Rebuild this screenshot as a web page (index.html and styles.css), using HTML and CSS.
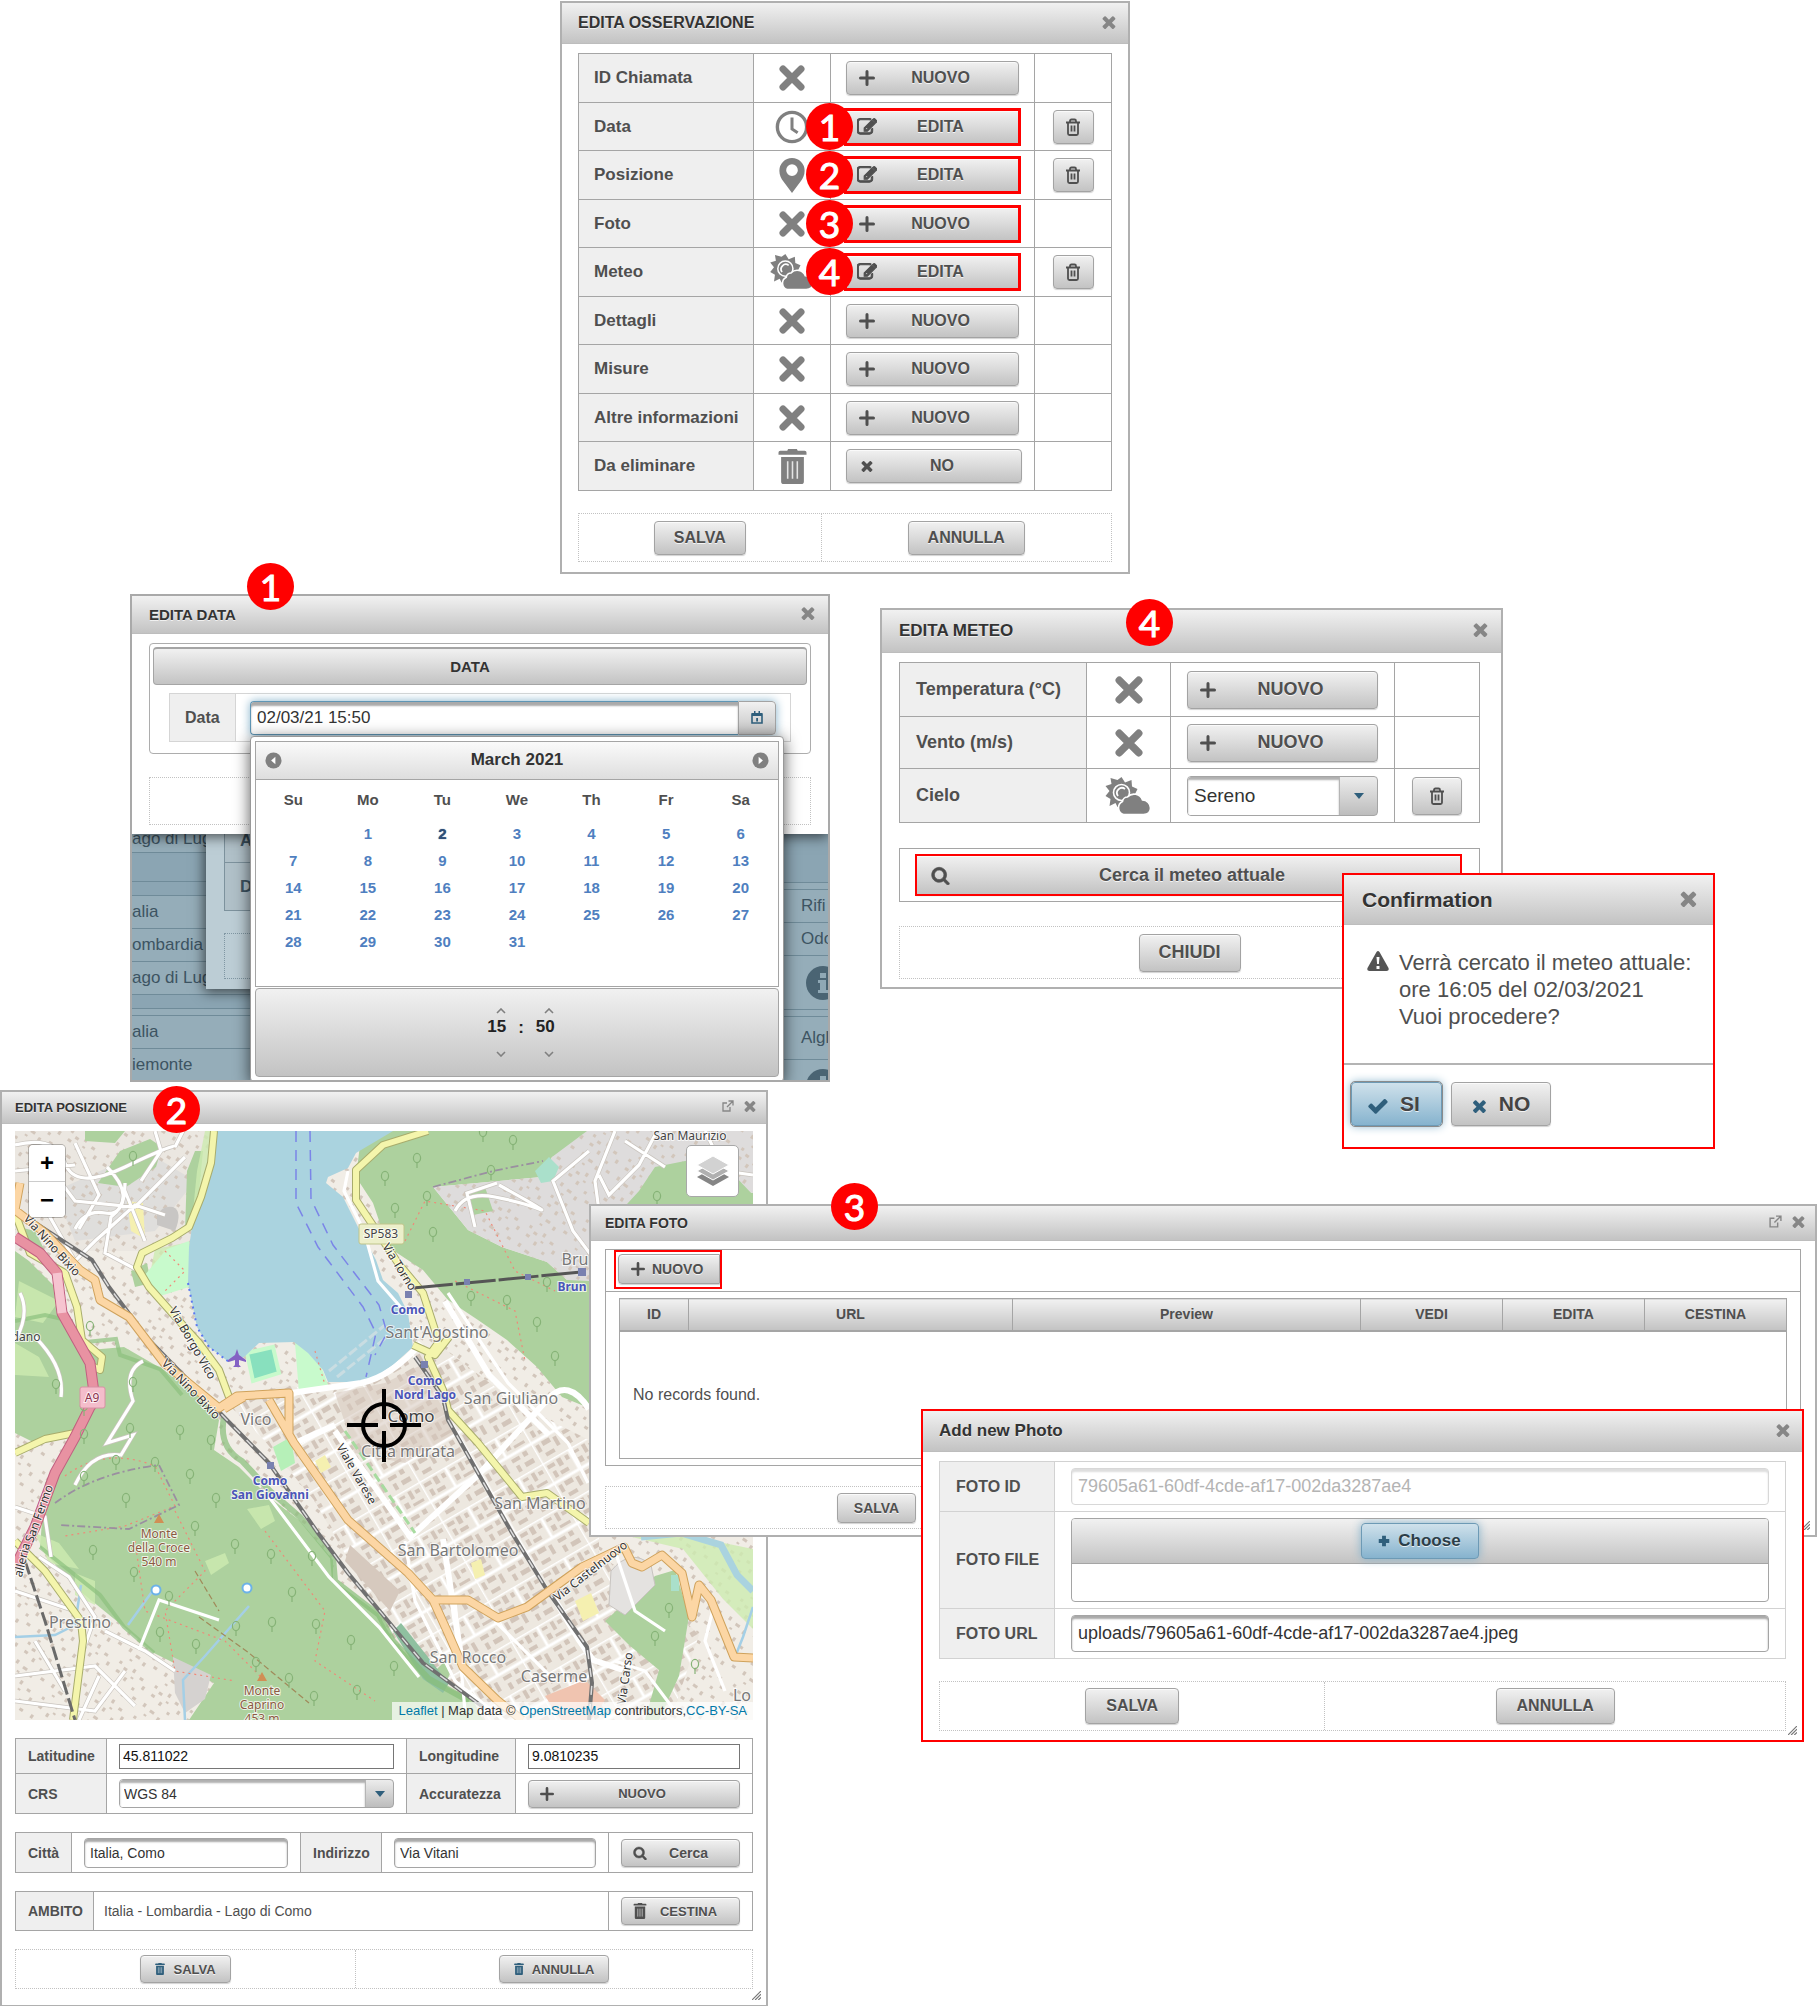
FILE: index.html
```html
<!DOCTYPE html>
<html lang="it">
<head>
<meta charset="utf-8">
<meta name="viewport" content="width=device-width, initial-scale=1">
<title>Edita osservazione</title>
<link rel="stylesheet" href="styles.css">
</head>
<body>

<!-- Icon sprite -->
<svg class="sprite" aria-hidden="true">
  <symbol id="i-times" viewBox="250 250 1300 1300"><path d="M1490 1322q0 40-28 68l-136 136q-28 28-68 28t-68-28l-294-294-294 294q-28 28-68 28t-68-28l-136-136q-28-28-28-68t28-68l294-294-294-294q-28-28-28-68t28-68l136-136q28-28 68-28t68 28l294 294 294-294q28-28 68-28t68 28l136 136q28 28 28 68t-28 68l-294 294 294 294q28 28 28 68z"/></symbol>
  <symbol id="i-cross" viewBox="0 0 26 26"><path d="M4 4l18 18M22 4L4 22" fill="none" stroke="currentColor" stroke-width="7" stroke-linecap="round"/></symbol>
  <symbol id="i-plus" viewBox="0 0 16 16"><path d="M8 1.500v13M1.500 8h13" fill="none" stroke="currentColor" stroke-width="3" stroke-linecap="round"/></symbol>
  <symbol id="i-plus-bold" viewBox="0 0 16 16"><path d="M8 2v12M2 8h12" fill="none" stroke="currentColor" stroke-width="4.400"/></symbol>
  <symbol id="i-edit" viewBox="0 0 1792 1792"><path d="M888 1184l116-116-152-152-116 116v56h96v96h56zm520-126v190q0 119-84.500 203.500t-203.500 84.500h-832q-119 0-203.500-84.500t-84.500-203.500v-832q0-119 84.500-203.500t203.500-84.500h832q63 0 117 25 15 7 18 23 3 17-9 29l-49 49q-14 14-32 8-23-6-45-6h-832q-66 0-113 47t-47 113v832q0 66 47 113t113 47h832q66 0 113-47t47-113v-126q0-13 9-22l64-64q15-15 35-7t20 29zm-96-738l288 288-672 672h-288v-288zm444 132l-92 92-288-288 92-92q28-28 68-28t68 28l152 152q28 28 28 68t-28 68z" stroke="currentColor" stroke-width="90"/></symbol>
  <symbol id="i-trash-o" viewBox="0 0 16 18"><g fill="none" stroke="currentColor" stroke-width="1.800"><path d="M3 5v10.500q0 1.500 1.500 1.500h7q1.500 0 1.500-1.500V5M1 4.500h14M5 4.500V3q0-1.500 1.500-1.500h3Q11 1.500 11 3v1.500M6.500 7.500v6M9.500 7.500v6"/></g></symbol>
  <symbol id="i-trash" viewBox="0 0 32 40"><path d="M11 0h10l1 2h8q2 0 2 2v2.500H0V4q0-2 2-2h8zM3 9h26v28q0 3-3 3H6q-3 0-3-3z"/><path d="M10.500 14v20M16 14v20M21.500 14v20" stroke="#fff" stroke-width="1.800" opacity=".8"/></symbol>
  <symbol id="i-clock" viewBox="0 0 36 36"><circle cx="18" cy="18" r="15.500" fill="none" stroke="currentColor" stroke-width="3.600"/><path d="M18 8v12l6 4" fill="none" stroke="currentColor" stroke-width="3.200"/></symbol>
  <symbol id="i-marker" viewBox="0 0 26 36"><path d="M13 0a13 13 0 0 1 13 13c0 5-2 8-4 11l-9 12-9-12C2 21 0 18 0 13A13 13 0 0 1 13 0zm0 6.500a6 6 0 1 0 0 12 6 6 0 0 0 0-12z" fill-rule="evenodd"/></symbol>
  <symbol id="i-cloud-sun" viewBox="0 0 46 38"><path d="M16 0l3.500 5.500L26 3l.5 6.500L32 12l-3 6-8 14-9-2-2-4-6 3 1-7-5-3 4-5-4-5 6-2-1-6 7 2z"/><circle cx="16" cy="15.500" r="8" fill="none" stroke="#fff" stroke-width="1.600"/><path d="M12.500 19a5 5 0 0 1 7-7" fill="none" stroke="#fff" stroke-width="1.800"/><path d="M18 37.500a7 7 0 0 1-1-13 5 5 0 0 1 5-4.500 9 9 0 0 1 15 3 8 8 0 0 1 8 8q0 6.500-7 6.500z" stroke="#fff" stroke-width="1.600"/></symbol>
  <symbol id="i-search" viewBox="0 0 1792 1792"><path d="M1216 832q0-185-131.500-316.500t-316.500-131.500-316.500 131.500-131.500 316.500 131.500 316.500 316.500 131.500 316.500-131.500 131.500-316.500zm512 832q0 52-38 90t-90 38q-54 0-90-38l-343-342q-179 124-399 124-143 0-273.500-55.500t-225-150-150-225-55.500-273.500 55.500-273.500 150-225 225-150 273.500-55.500 273.500 55.500 225 150 150 225 55.500 273.500q0 220-124 399l343 343q37 37 37 90z" stroke="currentColor" stroke-width="60"/></symbol>
  <symbol id="i-check" viewBox="100 200 1600 1400"><path d="M1671 566q0 40-28 68l-724 724-136 136q-28 28-68 28t-68-28l-136-136-362-362q-28-28-28-68t28-68l136-136q28-28 68-28t68 28l294 295 656-657q28-28 68-28t68 28l136 136q28 28 28 68z"/></symbol>
  <symbol id="i-ext" viewBox="0 0 12 12"><path d="M5 3H1v8h7V7M6.500 1H11v4.500M11 1L5 7" fill="none" stroke="currentColor" stroke-width="1.300"/></symbol>
  <symbol id="i-warn" viewBox="0 0 22 20"><path d="M9.500 1q1.500-2 3 0l9 16q1 3-2 3h-17q-3 0-2-3zM9.500 6l.6 7h1.800l.6-7zm0 9v3h3v-3z" fill-rule="evenodd"/></symbol>
  <symbol id="i-calendar" viewBox="0 0 12 13"><path d="M1 3h10v9H1z" fill="none" stroke="currentColor" stroke-width="1.600"/><path d="M1 2h10v3H1zM3 0h1.500v3H3zM7.500 0H9v3H7.500zM5.200 7h1.800v3.500H5.200z"/></symbol>
  <symbol id="i-caret" viewBox="0 0 12 7"><path d="M0 0h12L6 7z"/></symbol>
  <symbol id="i-up" viewBox="0 0 10 6"><path d="M1 5l4-4 4 4" fill="none" stroke="currentColor" stroke-width="1.600"/></symbol>
  <symbol id="i-down" viewBox="0 0 10 6"><path d="M1 1l4 4 4-4" fill="none" stroke="currentColor" stroke-width="1.600"/></symbol>
  <symbol id="i-prev" viewBox="0 0 18 18"><circle cx="9" cy="9" r="8.500"/><path d="M11 5v8L6.500 9z" fill="#fff"/></symbol>
  <symbol id="i-next" viewBox="0 0 18 18"><circle cx="9" cy="9" r="8.500"/><path d="M7 5v8l4.500-4z" fill="#fff"/></symbol>
  <symbol id="i-grip" viewBox="0 0 10 10"><path d="M0 10L10 0M3.500 10L10 3.500M7 10l3-3" stroke="currentColor" stroke-width="1.300"/></symbol>
  <symbol id="i-info" viewBox="0 0 34 34"><circle cx="17" cy="17" r="17"/><path d="M14 7h6v5h-6zM12 14h8v10h3v3H12v-3h2v-7h-2z" fill="#8fa8b5"/></symbol>
  <symbol id="i-layers" viewBox="0 0 32 30"><path d="M16 12l16 9-16 9-16-9z" fill="#858585"/><path d="M16 6l16 9-16 9-16-9z" fill="#b0b0b0" stroke="#fff"/><path d="M16 0l16 9-16 9L0 9z" fill="#d2d2d2" stroke="#fff"/></symbol>
</svg>

<main class="desktop">

  <!-- Edita osservazione -->
  <section class="window win-obs">
    <header class="titlebar"><h2>EDITA OSSERVAZIONE</h2><button class="tool" aria-label="Chiudi"><svg><use href="#i-times"/></svg></button></header>
    <table class="props">
      <colgroup><col class="c-label"><col class="c-icon"><col><col class="c-del"></colgroup>
      <tr><th scope="row">ID Chiamata</th><td class="state"><svg class="st-x"><use href="#i-cross"/></svg></td><td class="act"><button class="btn"><svg><use href="#i-plus"/></svg><span>NUOVO</span></button></td><td></td></tr>
      <tr><th scope="row">Data</th><td class="state"><svg class="st-clock"><use href="#i-clock"/></svg><b class="badge">1</b></td><td class="act"><button class="btn marked"><svg class="wide"><use href="#i-edit"/></svg><span>EDITA</span></button></td><td class="del"><button class="btn" aria-label="Elimina"><svg><use href="#i-trash-o"/></svg></button></td></tr>
      <tr><th scope="row">Posizione</th><td class="state"><svg class="st-marker"><use href="#i-marker"/></svg><b class="badge">2</b></td><td class="act"><button class="btn marked"><svg class="wide"><use href="#i-edit"/></svg><span>EDITA</span></button></td><td class="del"><button class="btn" aria-label="Elimina"><svg><use href="#i-trash-o"/></svg></button></td></tr>
      <tr><th scope="row">Foto</th><td class="state"><svg class="st-x"><use href="#i-cross"/></svg><b class="badge">3</b></td><td class="act"><button class="btn marked"><svg><use href="#i-plus"/></svg><span>NUOVO</span></button></td><td></td></tr>
      <tr><th scope="row">Meteo</th><td class="state"><svg class="st-cloud"><use href="#i-cloud-sun"/></svg><b class="badge">4</b></td><td class="act"><button class="btn marked"><svg class="wide"><use href="#i-edit"/></svg><span>EDITA</span></button></td><td class="del"><button class="btn" aria-label="Elimina"><svg><use href="#i-trash-o"/></svg></button></td></tr>
      <tr><th scope="row">Dettagli</th><td class="state"><svg class="st-x"><use href="#i-cross"/></svg></td><td class="act"><button class="btn"><svg><use href="#i-plus"/></svg><span>NUOVO</span></button></td><td></td></tr>
      <tr><th scope="row">Misure</th><td class="state"><svg class="st-x"><use href="#i-cross"/></svg></td><td class="act"><button class="btn"><svg><use href="#i-plus"/></svg><span>NUOVO</span></button></td><td></td></tr>
      <tr><th scope="row">Altre informazioni</th><td class="state"><svg class="st-x"><use href="#i-cross"/></svg></td><td class="act"><button class="btn"><svg><use href="#i-plus"/></svg><span>NUOVO</span></button></td><td></td></tr>
      <tr><th scope="row">Da eliminare</th><td class="state"><svg class="st-trash"><use href="#i-trash"/></svg></td><td class="act last"><button class="btn"><svg class="small"><use href="#i-times"/></svg><span>NO</span></button></td><td></td></tr>
    </table>
    <footer class="actions"><div><button class="btn">SALVA</button></div><div><button class="btn">ANNULLA</button></div></footer>
  </section>

  <!-- Edita data -->
  <div class="scene">
    <section class="window win-date">
      <header class="titlebar"><h2>EDITA DATA</h2><button class="tool" aria-label="Chiudi"><svg><use href="#i-times"/></svg></button></header>
      <div class="fieldset">
        <h3>DATA</h3>
        <div class="date-row">
          <label for="date">Data</label>
          <div class="date-cell">
            <div class="date-field">
              <input id="date" type="text" value="02/03/21 15:50"><button aria-label="Apri calendario"><svg><use href="#i-calendar"/></svg></button>
              <div class="calendar">
                <div class="cal-head"><button aria-label="Mese precedente"><svg><use href="#i-prev"/></svg></button><span>March 2021</span><button aria-label="Mese successivo"><svg><use href="#i-next"/></svg></button></div>
                <div class="cal-body">
                  <table>
                    <thead><tr><th>Su</th><th>Mo</th><th>Tu</th><th>We</th><th>Th</th><th>Fr</th><th>Sa</th></tr></thead>
                    <tbody>
                      <tr><td></td><td>1</td><td class="today">2</td><td>3</td><td>4</td><td>5</td><td>6</td></tr>
                      <tr><td>7</td><td>8</td><td>9</td><td>10</td><td>11</td><td>12</td><td>13</td></tr>
                      <tr><td>14</td><td>15</td><td>16</td><td>17</td><td>18</td><td>19</td><td>20</td></tr>
                      <tr><td>21</td><td>22</td><td>23</td><td>24</td><td>25</td><td>26</td><td>27</td></tr>
                      <tr><td>28</td><td>29</td><td>30</td><td>31</td><td></td><td></td><td></td></tr>
                    </tbody>
                  </table>
                </div>
                <div class="cal-time">
                  <div><button aria-label="Ora avanti"><svg><use href="#i-up"/></svg></button><b>15</b><button aria-label="Ora indietro"><svg><use href="#i-down"/></svg></button></div>
                  <b>:</b>
                  <div><button aria-label="Minuto avanti"><svg><use href="#i-up"/></svg></button><b>50</b><button aria-label="Minuto indietro"><svg><use href="#i-down"/></svg></button></div>
                </div>
              </div>
            </div>
          </div>
        </div>
      </div>
      <footer class="actions"><div></div></footer>
    </section>
    <div class="backdrop">
      <ul class="rows rows-left">
        <li class="r1">ago di Lug</li><li class="band"></li><li class="gap"></li><li>alia</li><li>ombardia</li><li>ago di Lug</li><li class="gap"></li><li class="thin"></li><li>alia</li><li>iemonte</li>
      </ul>
      <div class="behind"><div class="cells"><b>A</b><b>D</b></div><div class="dots"></div></div>
      <ul class="rows rows-right">
        <li class="top"></li><li class="thin"></li><li>Rifi</li><li>Odo</li><li class="info"><svg><use href="#i-info"/></svg></li><li class="thin"></li><li class="tall">Algl</li><li class="info cut"><svg><use href="#i-info"/></svg></li>
      </ul>
    </div>
  </div>
  <b class="badge at-date">1</b>

  <!-- Edita meteo -->
  <section class="window win-meteo">
    <b class="badge">4</b>
    <header class="titlebar"><h2>EDITA METEO</h2><button class="tool" aria-label="Chiudi"><svg><use href="#i-times"/></svg></button></header>
    <div class="win-body">
      <table class="props">
        <colgroup><col class="c-label"><col class="c-icon"><col><col class="c-del"></colgroup>
        <tr><th scope="row">Temperatura (°C)</th><td class="state"><svg class="st-x"><use href="#i-cross"/></svg></td><td class="act"><button class="btn"><svg><use href="#i-plus"/></svg><span>NUOVO</span></button></td><td></td></tr>
        <tr><th scope="row">Vento (m/s)</th><td class="state"><svg class="st-x"><use href="#i-cross"/></svg></td><td class="act"><button class="btn"><svg><use href="#i-plus"/></svg><span>NUOVO</span></button></td><td></td></tr>
        <tr><th scope="row"><label for="sky">Cielo</label></th><td class="state"><svg class="st-cloud"><use href="#i-cloud-sun"/></svg></td><td class="act"><div class="select"><select id="sky"><option>Sereno</option></select><svg><use href="#i-caret"/></svg></div></td><td class="del"><button class="btn" aria-label="Elimina"><svg><use href="#i-trash-o"/></svg></button></td></tr>
      </table>
      <div class="search-box"><button class="btn marked"><svg><use href="#i-search"/></svg><span>Cerca il meteo attuale</span></button></div>
      <footer class="actions single"><div><button class="btn">CHIUDI</button></div></footer>
    </div>
  </section>

  <!-- Confirmation -->
  <section class="window win-confirm red">
    <header class="titlebar"><h2>Confirmation</h2><button class="tool" aria-label="Chiudi"><svg><use href="#i-times"/></svg></button></header>
    <div class="message"><svg><use href="#i-warn"/></svg><p>Verrà cercato il meteo attuale:<br>ore 16:05 del 02/03/2021<br>Vuoi procedere?</p></div>
    <footer><button class="btn active"><svg><use href="#i-check"/></svg>SI</button><button class="btn"><svg><use href="#i-times"/></svg>NO</button></footer>
  </section>

  <!-- Edita posizione -->
  <section class="window win-pos">
    <b class="badge">2</b>
    <header class="titlebar"><h2>EDITA POSIZIONE</h2><button class="tool ext" aria-label="Massimizza"><svg><use href="#i-ext"/></svg></button><button class="tool" aria-label="Chiudi"><svg><use href="#i-times"/></svg></button></header>
    <div class="map">
      <svg class="tiles" viewBox="0 0 738 589" preserveAspectRatio="xMidYMid slice" role="img" aria-label="Mappa di Como">
        <defs>
          <pattern id="p-city" width="58" height="46" patternUnits="userSpaceOnUse" patternTransform="rotate(-30)">
            <path d="M3 4h8v4H3zM14 3h5v8h-5zM23 4h4v5h-4zM5 12h4v7H5zM12 15h9v4h-9zM33 4h6v3h-6zM43 3h4v9h-4zM50 5h5v4h-5zM34 12h5v6h-5zM42 16h12v3H42zM3 27h4v8H3zM10 26h9v5h-9zM22 28h4v10h-4zM8 38h10v4H8zM33 27h9v4h-9zM46 26h5v5h-5zM34 35h4v7h-4zM43 36h10v5H43z" fill="#d2c5ba"/>
            <path d="M0 0h58M0 0v46M30 0v22M0 23h58M38 23v0" stroke="#fff" stroke-width="2.800" fill="none"/>
          </pattern>
          <pattern id="p-town" width="43" height="37" patternUnits="userSpaceOnUse" patternTransform="rotate(35)">
            <path d="M3 3h3v3H3zM10 6h4v3h-4zM19 2h3v4h-3zM5 12h4v3H5zM16 14h3v4h-3zM21 10h3v2h-3zM29 5h4v3h-4zM36 11h3v4h-3zM28 18h3v3h-3zM4 24h3v4H4zM13 26h5v3h-5zM23 28h3v4h-3zM34 25h4v3h-4zM10 33h3v2h-3z" fill="#d2c6bb"/>
          </pattern>
          <g id="tree" fill="none" stroke="#86b377" stroke-width="1.200"><ellipse cy="-5" rx="3.600" ry="4.600"/><path d="M0 0v5"/></g>
          <path id="streets" d="M0 14q40-10 50 18t60 4 50-20l8-16M30 30l30 40 60 6 50-50M20 60l40 70 20-20 40-36 30 10M92 36q30 30 4 50l-6 36 34 18M0 40l60-6M60 12l24 52-20 34M110 60l20 50M60 98q10-20 30-16t20-30M140 0l6 20-20 30M5 162q10 20-4 46M20 206q30 30 26 60M128 230q-20 10-10 40l-26 42 26-8-12 20q-30-4-46 30M0 376l30 10 6 40M24 426l30 20 26 40-14 40M0 460l60 20M0 545l80-10 40 40M90 500l40 20 30 20M84 545l-20 44M0 570l80 10 30-40M20 510l30 50M574 20l-36 30 20 50 30 40M600 0l-20 50 8 60M440 80q10-20 40-14t44 12-40-24M460 96l-8-34 30-10M640 4l-16 30-30 30-10-20M690 0l20 40 28 4M610 10l40 26"/>
          <path id="yellow" d="M199 0l-3 32-10 34-12 30-17 11-30 15-5 14 12 20 23 26 27 30 20 27 10 27M413 0l-45 14-27 25v30l22 33 20 30 25 30 12 37 3 13-10 14 15 33 5 20 30 33 44 54 25-4 42 30M0 82l15 40 35 20 12 34 5 33 20 17-2 13-10-5M75 276l-15 26-30 6-30 14M0 410l30 30 36 50 2 20-10 79M398 214l22 10 14-18"/>
          <path id="orange" d="M5 52L0 79l30 23 35 37 15 10 5 20 29 17 35 46 55 45 18-12 52-3 0 20M254 269l25 43 54 77 60 53 25 27 15 33 15 34 34 33 25 20M274 262v40M418 469h35l30 18 29-11 55-40 42-20 8 16 10 4 20-12 20 18 10 44 7-32 12 15 23 57 19 1M209 278l20-12"/>
          <path id="rail" d="M5 82l72 47 17 27 40 53 75 77 45 46 49 70 30 40 45 54 30 36 60 44M400 226l28 40 5 23 30 53 34 60 35 57 40 57 5 36-3 37"/>
        </defs>
        <rect width="738" height="589" fill="#f1ede6"/>
        <path d="M0 0h199v120H0z" fill="#ebe7e1"/>
        <path d="M40 60l90-40 50 30-40 50-80 10z" fill="#dfdedc"/>
        <rect width="738" height="589" fill="url(#p-town)"/>
        <path d="M209 269l65-15 40 10 80-40 30-10 80 60 80 40v110l60 40 40 40-30 90-40 65h-140l-40-40-60-120-75-130-50-60z" fill="#ede8e0"/>
        <path d="M209 269l65-15 40 10 80-40 30-10 80 60 80 40v110l60 40 40 40-30 90-40 65h-140l-40-40-60-120-75-130-50-60z" fill="url(#p-city)"/>
        <path d="M320 262l50-10 40-20 20 30 10 40-50 30-50-10z" fill="#d5c7bb" opacity=".55"/>
        <!-- woods -->
        <g fill="#add19e">
          <path d="M70 0h40l-10 12-30-2zM105 20l30-12 12 8-6 20-30 20-28-4zM172 40l8-20 8 0-6 60-12 20zM4 96l16 4 10 20-12 6zM116 140l16-8 4 20-16 4z"/>
          <path d="M0 120l14 10 30 30 5 30 14 30 46-4 40 23 40 30 15 20-5 30 25 17 30 30 30 23 34 40v20l45 33 15 27 35 37 45 23 10 20H174l25-37-60-30-30-26-49-40-35-40 5-64 30-50-40 10-20-10z"/>
          <path d="M418 0h214l-60 14-35 12-10 20-109 10 35 43 34 17 45 15 20 18h22v128l-27-11-25-30-30-27-29-20-30-20-25-30-35-23-15-44-17-26 5-40 40-35z"/>
          <path d="M647 48l91 14v24H560l40-22zM590 490l50-45 20-6 14 46-10 60-20 44h-14l14-50-30-25zM400 560l30-30 6 10-10 24z"/>
        </g>
        <path d="M572 0h166v62l-60-14-40 12-38 30-26 10v50l-22-1-20-18-45-15-34-17-35-43 109-10 10-20z" fill="#dedcdc"/>
        <path d="M572 0h166v62l-60-14-40 12-38 30-26 10v50l-22-1-20-18-45-15-34-17-35-43 109-10 10-20z" fill="url(#p-town)"/>
        <path d="M640 36l60-12 38 40v22H600l24-26zM450 66l20-10 8 24-20 4z" fill="#add19e"/>
        <g fill="#cdebb0">
          <path d="M4 150l40 20-16 22-28-6zM0 212l24 14 10 20-34-2zM60 442l20 8v24l-20-10zM20 402l24 10 20 26-30-6zM232 378l22-4 6 16-14 8zM600 402h60l78 16v80l-30-30-40-50zM180 110l-6 40-40-2 6-30zM190 0h8l-6 80-16 20 6-60zM190 430l20-8 4 10-18 12z" opacity=".8"/>
        </g>
        <path d="M152 118l22-8v46l-32 10-14-20zM280 212l20 8 14 36-30 6z" fill="#c8facc"/>
        <path d="M142 84q6-10 16-8 10 4 2 24l-18-6z" fill="#c8c6c4"/>
        <path d="M112 70l16 2 2 36-14-8zM300 330l10-6 6 12-10 6zM456 432l10-4 4 16-10 4zM560 470l16-8 8 20-16 8z" fill="#f5f0b0"/>
        <path d="M378 500l8-8 38 48 10 12-6 10-20-14z" fill="#8fc0a0"/>
        <path d="M232 222l26-6 6 26-26 8z" fill="#88e0be" stroke="#c8facc" stroke-width="4"/>
        <path d="M258 316l18-10 4 26-14 8z" fill="#b6f0b8"/>
        <path d="M335 414l50 46-10 20-45-50z" fill="#d6c9be"/>
        <path d="M158 526l38 18-6 24-20 14-10-20z" fill="#d5d2d0"/>
        <path d="M530 565l40-16 20 20-14 20h-30z" fill="#f0c4b0"/>
        <path d="M520 40l14-14 10 10-6 14-12 2zM656 444h8v16h-8z" fill="#aae0cb"/>
        <path d="M596 440q20-24 40-6l4 20-30 30-16-10z" fill="#e4e2e0" stroke="#c8c4c0"/>
        <!-- forest edge shading -->
        <path d="M209 286q-6 30 18 44l28 30 30 26 33 40 2 24 44 34 14 26 36 38 40 22" fill="none" stroke="#86bd78" stroke-width="6" opacity=".7"/>
        <path d="M0 190l30-6 26 6 5 22 40-4 4 16 40 14 22 26M25 416l60 48 24 32 30 26" fill="none" stroke="#8cc07e" stroke-width="4" opacity=".7"/>
        <!-- water -->
        <path d="M199 0l-3 32-7 24-12 40-3 20-1 36 9 44 12 20 20 15 15-5 15-14 35-1 14 11 15 17 5 12h40l25-17 20-18-5-34-10-20-15-13-7-20-18-33-15-30-17-14 2-6 20-9 8-15 27-16 10-6z" fill="#aad3df"/>
        <path d="M738 460l-16-16-16-30-40-12-40 4" fill="none" stroke="#aad3df" stroke-width="7"/>
        <path d="M0 506l40-2 20-10 6-40M170 589l-2-40 22-24 44-50M139 458l-26 36M738 476l-10 30-8 20" fill="none" stroke="#a4cfe6" stroke-width="2.500"/>
        <path d="M314 240l56-46M322 246l50-40" stroke="#c9dde2" stroke-width="3" stroke-dasharray="10 3"/>
        <path d="M281 0v72l22 44 45 60 13 26-10 44M295 0l1 68 22 46 46 60 8 28-12 22" fill="none" stroke="#7b85e8" stroke-width="1.500" stroke-dasharray="11 8"/>
        <path d="M173 152l9 44 12 20 20 15" fill="none" stroke="#5c78f0" stroke-width="2" stroke-dasharray="2 4"/>
        <!-- footpaths -->
        <g fill="none" stroke="#f08878" stroke-width="1.200" stroke-dasharray="2 4">
          <path d="M50 345q40-30 90-10l20 40-50 20-60 10M160 380l30 60-40 40 10 60 60 10M250 400l60 80-10 50 60 40M120 410l10 70 80 30 40 40M390 110l20-40 60 10 30 60 40 20M440 150l60 30 10 50M300 220l10 34M150 120l20 20-20 20"/>
        </g>
        <path d="M40 372q40-30 104-38l20 40-50 24-70-4M418 56l60-16 50-10" fill="none" stroke="#9a8fa0" stroke-width="1.800" stroke-dasharray="8 3 2 3"/>
        <path d="M184 486l50 36 60 50M180 440l24 40" fill="none" stroke="#a08a5a" stroke-width="1.200" stroke-dasharray="6 3"/>
        <!-- minor streets -->
        <g fill="none">
          <use href="#streets" stroke="#c9c4be" stroke-width="4.500"/>
          <use href="#streets" stroke="#fff" stroke-width="3.200"/>
          <path d="M333 40l-4 20 20 40 14 50 26 30M433 162l60 90 60 60 20 40M254 366l60 80 50 50 40 50M390 410l10 60 40 80 50 40M440 470l10 110M480 490l60 60M600 420l20 60 30 20M700 470l-10 40 20 50M600 530l30 10 30 40M204 489l-60-20-20 50" stroke="#fff" stroke-width="3.200"/>
          <path d="M393 408l70-64 70-76q20-22 41 10M276 262l70-10q30-6 60-40M280 312l40-18M320 300l74 104M430 170l44 74 60 60M534 459l30 50 14 20 30 10M428 408l20 130" stroke="#fff" stroke-width="6"/>
        </g>
        <path d="M330 300l70 102" stroke="#a8dba0" stroke-width="3" stroke-dasharray="9 4"/>
        <!-- main roads and railways -->
        <g fill="none" stroke-linejoin="round">
          <use href="#yellow" stroke="#a8ac6c" stroke-width="8"/>
          <use href="#yellow" stroke="#f4f5ac" stroke-width="6"/>
          <path d="M10 430l20 60 30 99" stroke="#6a6a6a" stroke-width="3" stroke-dasharray="14 4"/>
          <use href="#rail" stroke="#707070" stroke-width="4"/>
          <use href="#rail" stroke="#ddd" stroke-width="1.500" stroke-dasharray="9 9"/>
          <path d="M398 157l169-16" stroke="#555" stroke-width="3" stroke-dasharray="40 3"/>
          <use href="#orange" stroke="#cfa25c" stroke-width="9"/>
          <use href="#orange" stroke="#fcd6a4" stroke-width="7"/>
          <path d="M0 106l25 16 17 20 5 40 28 50 5 37-5 7-15 30-20 36-20 54-20 40" stroke="#c06080" stroke-width="11"/>
          <path d="M0 106l25 16 17 20 5 40 28 50 5 37-5 7-15 30-20 36-20 54-20 40" stroke="#e892a2" stroke-width="9"/>
          <path d="M42 142l5 40" stroke="#f6c4d0" stroke-width="9"/>
        </g>
        <!-- trees -->
        <g>
          <use href="#tree" x="118" y="30"/><use href="#tree" x="402" y="32"/><use href="#tree" x="370" y="50"/><use href="#tree" x="412" y="70"/><use href="#tree" x="476" y="44"/><use href="#tree" x="498" y="14"/><use href="#tree" x="380" y="82"/><use href="#tree" x="418" y="106"/><use href="#tree" x="456" y="170"/><use href="#tree" x="492" y="174"/><use href="#tree" x="532" y="156"/><use href="#tree" x="522" y="196"/><use href="#tree" x="540" y="230"/><use href="#tree" x="468" y="6"/>
          <use href="#tree" x="75" y="200"/><use href="#tree" x="118" y="256"/><use href="#tree" x="41" y="258"/><use href="#tree" x="69" y="280"/><use href="#tree" x="115" y="302"/><use href="#tree" x="165" y="304"/><use href="#tree" x="196" y="314"/><use href="#tree" x="69" y="308"/><use href="#tree" x="101" y="334"/><use href="#tree" x="140" y="336"/><use href="#tree" x="69" y="350"/><use href="#tree" x="175" y="348"/><use href="#tree" x="111" y="372"/><use href="#tree" x="201" y="372"/><use href="#tree" x="180" y="400"/><use href="#tree" x="78" y="424"/><use href="#tree" x="220" y="418"/><use href="#tree" x="256" y="428"/><use href="#tree" x="297" y="430"/><use href="#tree" x="119" y="446"/><use href="#tree" x="277" y="466"/><use href="#tree" x="154" y="470"/><use href="#tree" x="145" y="506"/><use href="#tree" x="221" y="500"/><use href="#tree" x="257" y="496"/><use href="#tree" x="301" y="498"/><use href="#tree" x="336" y="514"/><use href="#tree" x="181" y="518"/><use href="#tree" x="241" y="536"/><use href="#tree" x="274" y="552"/><use href="#tree" x="299" y="570"/><use href="#tree" x="342" y="564"/><use href="#tree" x="379" y="540"/><use href="#tree" x="640" y="510"/><use href="#tree" x="654" y="482"/><use href="#tree" x="642" y="70"/><use href="#tree" x="680" y="538"/>
        </g>
        <path d="M144 350l5 9h-10zM247 508l5 9h-10z" transform="translate(0 33)" fill="#d08f55"/>
        <g fill="#fff" stroke="#6cb2e8" stroke-width="2"><circle cx="141" cy="459" r="4.500"/><circle cx="232" cy="457" r="4.500"/></g>
        <path d="M222 218l2 6 7 5v2l-7-2v5l2 2h-8l2-2v-5l-7 2v-2l7-5z" fill="#8461c4"/>
        <g fill="#7981b0"><path d="M390 160h7v7h-7zM406 230h7v7h-7zM563 137h8v8h-8zM252 331h7v7h-7zM449 148h6v6h-6zM510 143h6v6h-6z"/></g>
        <!-- road shields -->
        <rect x="344" y="93" width="45" height="20" rx="2" fill="#ecefca" stroke="#bfc48a"/>
        <rect x="65" y="256" width="25" height="21" rx="2" fill="#f4bdcb" stroke="#d890a4"/>
        <g class="lb"><text x="366" y="107">SP583</text><text x="77" y="271" fill="#8a2e4c">A9</text><text x="675" y="9">San Maurizio</text><text x="11" y="210">dano</text></g>
        <g class="lb place">
          <text x="422" y="207">Sant'Agostino</text><text x="496" y="273">San Giuliano</text><text x="241" y="294">Vico</text><text x="393" y="326">Città murata</text><text x="525" y="378">San Martino</text><text x="443" y="425">San Bartolomeo</text><text x="453" y="532">San Rocco</text><text x="539" y="551">Caserme</text><text x="65" y="497">Prestino</text><text x="727" y="570">Lo</text><text x="560" y="134">Bru</text><text x="396" y="291" class="main">Como</text>
        </g>
        <g class="lb station">
          <text x="393" y="183">Como</text><text x="410" y="254">Como</text><text x="410" y="268">Nord Lago</text><text x="255" y="354">Como</text><text x="255" y="368">San Giovanni</text><text x="557" y="160">Brun</text>
        </g>
        <g class="lb peak">
          <text x="144" y="407">Monte</text><text x="144" y="421">della Croce</text><text x="144" y="435">540 m</text><text x="247" y="564">Monte</text><text x="247" y="578">Caprino</text><text x="247" y="592">453 m</text>
        </g>
        <g class="lb road">
          <text transform="translate(34 117) rotate(48)">Via Nino Bixio</text><text transform="translate(174 214) rotate(60)">Via Borgo Vico</text><text transform="translate(381 138) rotate(58)">Via Torno</text><text transform="translate(173 261) rotate(46)">Via Nino Bixio</text><text transform="translate(338 345) rotate(60)">Viale Varese</text><text transform="translate(28 384) rotate(-70)">San Fermo</text><text transform="translate(11 430) rotate(-76)">alleria</text><text transform="translate(578 443) rotate(-38)">Via Castelnuovo</text><text transform="translate(614 548) rotate(-82)">Via Carso</text>
        </g>
        <g fill="none" stroke="#000" stroke-width="4"><circle cx="369" cy="294" r="21"/><path d="M332 294h31M375 294h31M369 258v30M369 300v31"/></g>
      </svg>
      <div class="zoom"><button aria-label="Ingrandisci">+</button><button aria-label="Riduci">−</button></div>
      <button class="layers" aria-label="Livelli"><svg><use href="#i-layers"/></svg></button>
      <p class="credit"><a href="#leaflet">Leaflet</a> | Map data © <a href="#osm">OpenStreetMap</a> contributors,<a href="#cc">CC-BY-SA</a></p>
    </div>
    <table class="form form-coords">
      <colgroup><col class="k1"><col class="k2"><col class="k3"><col></colgroup>
      <tr><th><label for="lat">Latitudine</label></th><td><input class="plain" id="lat" type="text" value="45.811022"></td><th><label for="lon">Longitudine</label></th><td><input class="plain" id="lon" type="text" value="9.0810235"></td></tr>
      <tr><th><label for="crs">CRS</label></th><td><div class="select"><select id="crs"><option>WGS 84</option></select><svg><use href="#i-caret"/></svg></div></td><th>Accuratezza</th><td><button class="btn"><svg><use href="#i-plus"/></svg><span>NUOVO</span></button></td></tr>
    </table>
    <table class="form form-address">
      <colgroup><col class="k1"><col class="k2"><col class="k3"><col><col class="k5"></colgroup>
      <tr><th><label for="city">Città</label></th><td><input class="field" id="city" type="text" value="Italia, Como"></td><th><label for="street">Indirizzo</label></th><td><input class="field" id="street" type="text" value="Via Vitani"></td><td><button class="btn"><svg><use href="#i-search"/></svg><span>Cerca</span></button></td></tr>
    </table>
    <table class="form form-area">
      <colgroup><col class="k1"><col><col class="k5"></colgroup>
      <tr><th scope="row">AMBITO</th><td>Italia - Lombardia - Lago di Como</td><td><button class="btn"><svg><use href="#i-trash"/></svg><span>CESTINA</span></button></td></tr>
    </table>
    <footer class="actions"><div><button class="btn blue-icon"><svg><use href="#i-trash"/></svg>SALVA</button></div><div><button class="btn blue-icon"><svg><use href="#i-trash"/></svg>ANNULLA</button></div></footer>
    <svg class="grip"><use href="#i-grip"/></svg>
  </section>

  <!-- Edita foto -->
  <section class="window win-foto">
    <b class="badge">3</b>
    <header class="titlebar"><h2>EDITA FOTO</h2><button class="tool ext" aria-label="Massimizza"><svg><use href="#i-ext"/></svg></button><button class="tool" aria-label="Chiudi"><svg><use href="#i-times"/></svg></button></header>
    <div class="panel">
      <div class="panel-tools"><div class="frame"><button class="btn"><svg><use href="#i-plus"/></svg>NUOVO</button></div></div>
      <div class="panel-body">
        <table class="records">
          <colgroup><col class="r1"><col class="r2"><col><col class="r4"><col class="r4"><col class="r4"></colgroup>
          <thead><tr><th>ID</th><th>URL</th><th>Preview</th><th>VEDI</th><th>EDITA</th><th>CESTINA</th></tr></thead>
          <tbody><tr><td colspan="6">No records found.</td></tr></tbody>
        </table>
      </div>
    </div>
    <footer class="actions"><div><button class="btn">SALVA</button></div><div></div></footer>
    <svg class="grip"><use href="#i-grip"/></svg>
  </section>

  <!-- Add new photo -->
  <section class="window win-add red">
    <header class="titlebar"><h2>Add new Photo</h2><button class="tool" aria-label="Chiudi"><svg><use href="#i-times"/></svg></button></header>
    <table class="form">
      <colgroup><col class="k1"><col></colgroup>
      <tr><th><label for="pid">FOTO ID</label></th><td><input class="field" id="pid" type="text" value="79605a61-60df-4cde-af17-002da3287ae4" disabled></td></tr>
      <tr class="tall"><th>FOTO FILE</th><td><div class="upload"><div><button class="btn active"><svg><use href="#i-plus-bold"/></svg>Choose</button></div></div></td></tr>
      <tr><th><label for="purl">FOTO URL</label></th><td><input class="field" id="purl" type="text" value="uploads/79605a61-60df-4cde-af17-002da3287ae4.jpeg"></td></tr>
    </table>
    <footer class="actions"><div><button class="btn">SALVA</button></div><div><button class="btn">ANNULLA</button></div></footer>
    <svg class="grip"><use href="#i-grip"/></svg>
  </section>

</main>
</body>
</html>
```

FILE: styles.css
```css
:root {
  --line: #a5a5a5;
  --grad: linear-gradient(#f1f1f1, #c3c3c3);
  --ink: #4f4f4f;
  --blue: #2f5f7c;
}

* { box-sizing: border-box; }

body {
  margin: 0;
  background: #fff;
  color: var(--ink);
  font-family: "Liberation Sans", Arial, sans-serif;
}

h2, h3, p, ul { margin: 0; padding: 0; }
button, input, select { font: inherit; color: inherit; margin: 0; }
svg { fill: currentColor; display: block; flex: none; }
.sprite { position: absolute; width: 0; height: 0; }

.desktop { position: relative; min-height: 2006px; }

/* windows */
.window {
  position: absolute;
  background: #fff;
  border: 2px solid #b0b0b0;
  font-size: var(--fs);
}
.window.red { border-color: #f00; }

.titlebar {
  display: flex;
  align-items: center;
  gap: 10px;
  height: var(--bar);
  padding: 0 var(--side);
  background: var(--grad);
  border-bottom: 1px solid #bdbdbd;
  color: #333;
  text-shadow: 0 1px 0 rgba(255, 255, 255, .7);
}
.titlebar h2 { flex: 1; font-size: var(--title); font-weight: bold; }

.tool { border: 0; padding: 0; background: none; color: #868686; }
.tool svg { width: var(--x, 14px); height: var(--x, 14px); margin-bottom: 3px; }

/* buttons */
.btn {
  display: inline-flex;
  align-items: center;
  justify-content: center;
  height: var(--bh);
  padding: 0 var(--bp, 19px);
  border: 1px solid #a3a3a3;
  border-radius: 4px;
  background: var(--grad);
  box-shadow: inset 0 1px 0 #fafafa, 0 1px 1px rgba(0, 0, 0, .18);
  color: var(--ink);
  font-size: var(--bf, var(--fs));
  font-weight: bold;
  text-shadow: 0 1px 0 rgba(255, 255, 255, .8);
  white-space: nowrap;
}
.btn svg { width: 14px; height: 14px; }
.btn span { flex: 1; text-align: center; }
.btn.marked { outline: 3px solid #f00; outline-offset: -1px; border-radius: 0; }
.btn.active {
  background: linear-gradient(#cfe1eb, #86b3ce);
  border-color: #6d9ab5;
  box-shadow: 0 0 10px #85b2cb;
  color: #2c3e48;
}
.active svg, .blue-icon svg { color: var(--blue); }

/* form controls */
.field {
  display: block;
  width: 100%;
  border: 1px solid var(--line);
  border-radius: 4px;
  background: #fff;
  box-shadow: inset 0 3px 2px #a9a9a9;
  color: #333;
}
.field:disabled { color: #b4b4b4; border-color: #d8d8d8; box-shadow: inset 0 3px 2px #dedede; }
.plain { display: block; width: 100%; border: 1px solid #767676; background: #fff; color: #111; }

.select {
  display: grid;
  grid-template-columns: 1fr var(--sw);
  align-items: center;
  justify-items: center;
  border: 1px solid var(--line);
  border-radius: 4px;
  overflow: hidden;
  background: linear-gradient(#ececec, #bdbdbd) right / var(--sw) 100% no-repeat #fff;
  height: var(--sh);
}
.select select {
  appearance: none;
  width: 100%;
  height: 100%;
  border: 0;
  border-right: 1px solid #b5b5b5;
  background: #fff;
  box-shadow: inset 0 3px 2px #b0b0b0;
  color: #333;
}
.select svg { width: 10px; height: 6px; color: var(--blue); }

/* badges */
.badge {
  position: absolute;
  z-index: 3;
  display: flex;
  align-items: center;
  justify-content: center;
  width: 47px;
  height: 47px;
  border-radius: 50%;
  background: #f00;
  color: #fff;
  font: 37px/47px Lato, sans-serif;
  -webkit-text-stroke: 1px #fff;
}
.at-date { left: 247px; top: 563px; }

/* footers with dotted frame */
.actions {
  display: grid;
  grid-template-columns: var(--split, 1fr 1fr);
  margin: 0 var(--side);
  border: 1px dotted #c2c2c2;
  height: var(--fh);
}
.actions div { display: flex; align-items: center; justify-content: center; }
.actions div + div { border-left: 1px dotted #c2c2c2; }
.actions.single { grid-template-columns: 1fr; }

/* property tables */
.props, .form {
  border-collapse: collapse;
  table-layout: fixed;
  width: calc(100% - 2 * var(--side));
  margin: 0 var(--side);
}
.props th, .props td, .form th, .form td { border: 1px solid var(--line); padding: 0; }
.props th, .form th { background: #efefef; text-align: left; padding-left: var(--pad); font-weight: bold; }
.state { position: relative; color: #808080; }
.state > svg { margin: 0 auto; }
.st-x { width: 26px; height: 26px; }
.st-clock { width: 34px; height: 34px; }
.st-marker { width: 26px; height: 35px; }
.st-cloud { width: 44px; height: 36px; }
.st-trash { width: 31px; height: 35px; }
.state .badge { left: 100%; top: 50%; margin: -24px 0 0 -24px; }
.props .act { padding: 0 var(--pad); }
.props .act.last { padding-right: 12px; }
.act .btn { display: flex; width: 100%; padding: 0 12px; }
.act .btn svg { width: 16px; height: 16px; }
.act .btn svg.wide { width: 20px; height: 20px; margin: 0 -2px; }
.act .btn svg.small { width: 12px; height: 12px; margin: 0 2px; }
.del .btn { display: flex; width: var(--dw); margin: 0 auto; padding: 0; }
.del .btn svg { width: 16px; height: 18px; }

/* Edita osservazione */
.win-obs {
  left: 560px; top: 1px; width: 570px; padding-bottom: 10px;
  --fs: 17px; --title: 16px; --bf: 16px; --bar: 41px; --side: 16px; --pad: 15px; --bh: 34px; --dw: 41px; --fh: 49px; --split: 242fr 291fr;
}
.win-obs .titlebar { padding-right: 12px; }
.win-obs .props { margin-top: 9px; margin-bottom: 22px; }
.win-obs tr { height: 49px; }
.win-obs tr:nth-child(even) { height: 48px; }
.win-obs .c-label { width: 175px; }
.win-obs .c-icon { width: 77px; }
.win-obs .c-del { width: 77px; }

/* Edita data */
.scene {
  position: absolute;
  left: 130px;
  top: 594px;
  width: 700px;
  height: 488px;
  display: flex;
  flex-direction: column;
  border: 2px solid #a9a9a9;
  overflow: hidden;
}
.win-date {
  position: relative;
  z-index: 2;
  border: 0;
  padding-bottom: 9px;
  box-shadow: 0 3px 12px rgba(0, 0, 0, .6);
  --fs: 16px; --title: 15px; --bar: 38px; --side: 17px; --fh: 48px;
}
.win-date .titlebar { padding-right: 13px; }
.win-date .actions { grid-template-columns: 1fr; }
.fieldset {
  margin: 9px var(--side) 23px;
  padding: 3px;
  border: 1px solid #adadad;
  border-radius: 4px;
}
.fieldset h3 {
  display: flex;
  align-items: center;
  justify-content: center;
  height: 38px;
  padding-right: 20px;
  border: 1px solid var(--line);
  border-top-width: 2px;
  border-radius: 4px;
  background: var(--grad);
  color: #333;
  font-size: 15px;
}
.date-row {
  display: grid;
  grid-template-columns: 66px 1fr;
  height: 49px;
  margin: 8px 16px;
  border: 1px solid #d5d5d5;
}
.date-row label { display: flex; align-items: center; padding-left: 15px; background: #efefef; border-right: 1px solid #d5d5d5; font-weight: bold; }
.date-cell { display: flex; align-items: center; padding: 0 14px 0 14px; }
.date-field {
  position: relative;
  display: flex;
  flex: 1;
  height: 34px;
  border-radius: 4px;
  box-shadow: 0 0 10px #85b2cb;
}
.date-field input {
  flex: 1;
  min-width: 0;
  padding: 0 6px;
  border: 1px solid #5f96b5;
  border-right: 0;
  border-radius: 4px 0 0 4px;
  background: #fff;
  box-shadow: inset 0 4px 2px #aaa;
  color: #333;
  font-size: 17px;
}
.date-field > button {
  display: flex;
  align-items: center;
  justify-content: center;
  width: 38px;
  border: 1px solid #a3a3a3;
  border-radius: 0 4px 4px 0;
  background: var(--grad);
  color: var(--blue);
}
.date-field > button svg { width: 12px; height: 13px; }

.calendar {
  position: absolute;
  left: 0;
  top: 35px;
  width: calc(100% + 8px);
  padding: 4px;
  border: 1px solid #999;
  border-radius: 4px;
  background: #fff;
  box-shadow: 0 3px 16px rgba(0, 0, 0, .65);
}
.cal-head {
  display: flex;
  align-items: center;
  justify-content: space-between;
  height: 39px;
  padding: 0 9px;
  border: 1px solid var(--line);
  background: linear-gradient(#fafafa, #dedede);
  color: #333;
  font-size: 17px;
  font-weight: bold;
}
.calendar button { border: 0; padding: 0; background: none; color: #808080; }
.cal-head svg { width: 17px; height: 17px; }
.cal-body { padding-bottom: 31px; border: 1px solid var(--line); border-top: 0; }
.cal-body table { width: 100%; border-collapse: collapse; table-layout: fixed; text-align: center; font-size: 15px; }
.cal-body th { height: 40px; padding: 0; }
.cal-body td { height: 27px; padding: 0; color: #4f7fc0; font-weight: bold; }
.cal-body td.today { color: #2f4f78; text-shadow: 0 0 1px #2f4f78; }
.cal-time {
  display: flex;
  align-items: center;
  justify-content: center;
  gap: 12px;
  height: 89px;
  margin-top: 1px;
  padding: 0 0 8px 8px;
  border: 1px solid var(--line);
  border-radius: 4px;
  background: var(--grad);
  color: #222;
  font-size: 17px;
}
.cal-time div { display: grid; justify-items: center; line-height: 20px; }
.cal-time button { line-height: 0; }
.cal-time svg { width: 10px; height: 6px; margin-left: 8px; }
.cal-time div button:last-child { padding-top: 14px; }
.cal-time div button:first-child { padding: 8px 0 3px; }

.backdrop {
  position: relative;
  flex: 1;
  display: flex;
  justify-content: space-between;
  background: #95adb9;
  color: #3d5462;
  font-size: 17px;
}
.rows { list-style: none; }
.rows li { display: flex; align-items: center; height: 33px; border-bottom: 1px solid #6f8b99; white-space: nowrap; overflow: hidden; }
.rows .r1 { height: 19px; align-items: flex-end; line-height: 26px; }
.rows .band { height: 29px; background: #8ba5b3; }
.rows .gap { height: 14px; background: #8ba5b3; }
.rows .thin { height: 7px; }
.rows .top { height: 49px; background: #8ba5b3; }
.rows .info { height: 54px; justify-content: flex-end; }
.rows .info svg { width: 34px; height: 34px; margin-right: -12px; color: #4a6473; }
.rows .info.cut { height: 44px; align-items: flex-end; }
.rows .tall { height: 43px; }
.rows-left { width: 120px; }
.rows-right { width: 46px; }
.rows-right li { padding-left: 19px; }
.rows-right .info { padding-left: 0; }
.behind {
  position: absolute;
  left: 74px;
  top: 0;
  width: 120px;
  height: 155px;
  padding-left: 18px;
  background: #bccdd5;
  box-shadow: -2px 3px 12px rgba(0, 0, 0, .6);
}
.behind .cells { border: solid #7d929d; border-width: 0 0 1px 1px; background: #b0c0c8; }
.behind b { display: flex; align-items: center; height: 47px; padding-left: 15px; }
.behind b:first-child { height: 29px; padding-bottom: 14px; border-bottom: 1px solid #7d929d; }
.behind .dots { margin-top: 22px; height: 46px; border: 1px dotted #8097a3; }

/* Edita meteo */
.win-meteo {
  left: 880px; top: 608px; width: 623px; padding-bottom: 8px;
  --fs: 18px; --title: 17px; --bar: 43px; --side: 17px; --pad: 16px; --bh: 38px; --dw: 50px; --fh: 53px; --x: 15px; --sw: 37px; --sh: 40px;
}
.win-meteo .titlebar { padding-right: 13px; }
.win-meteo > .badge { left: 244px; top: -11px; }
.win-body { padding-right: 4px; }
.win-meteo .props { margin-top: 9px; }
.win-meteo tr { height: 54px; }
.win-meteo tr:nth-child(2) { height: 52px; }
.win-meteo .c-label { width: 187px; }
.win-meteo .c-icon { width: 84px; }
.win-meteo .c-del { width: 85px; }
.win-meteo .select select { padding: 0 6px; font-size: 19px; }
.win-meteo .st-x { width: 28px; height: 28px; }
.win-meteo .st-cloud { width: 47px; height: 38px; }
.search-box { margin: 25px var(--side) 24px; padding: 6px 18px 6px 16px; border: 1px solid var(--line); }
.search-box .btn { display: flex; width: 100%; height: 40px; padding: 0 26px 0 14px; }
.search-box .btn.marked { outline-width: 2px; }
.search-box .btn svg { width: 19px; height: 19px; }

/* Confirmation */
.win-confirm {
  left: 1342px; top: 873px; width: 373px;
  --fs: 21px; --title: 21px; --bar: 50px; --side: 18px; --bh: 44px; --x: 17px;
}
.win-confirm .titlebar { padding-right: 16px; }
.message { display: flex; gap: 10px; padding: 24px 0 33px 23px; font-size: 22px; line-height: 27px; border-bottom: 2px solid #b4b4b4; }
.message svg { width: 22px; height: 20px; margin-top: 2px; color: #555; }
.message p { white-space: nowrap; }
.win-confirm footer { display: flex; gap: 9px; padding: 17px 6px 21px 7px; }
.win-confirm .btn { gap: 12px; padding: 0 20px; color: #444; }
.win-confirm .btn svg { color: var(--blue); width: 15px; height: 14px; margin-top: 3px; }
.win-confirm .btn.active { padding: 0 21px 0 16px; outline: 1px solid #8b8b8b; }
.win-confirm .btn.active svg { width: 20px; height: 18px; }

/* Edita posizione */
.win-pos {
  left: 0; top: 1090px; width: 768px; padding-bottom: 16px;
  --fs: 14px; --title: 13px; --bf: 13px; --bar: 32px; --side: 13px; --pad: 12px; --bh: 28px; --fh: 40px; --x: 12px; --sw: 27px; --sh: 29px; --split: 340fr 398fr;
}
.win-pos .titlebar { padding-right: 10px; }
.win-pos > .badge { left: 151px; top: -6px; }
.map { position: relative; margin: 7px var(--side) 18px; aspect-ratio: 738 / 589; overflow: hidden; }
.tiles { width: 100%; height: 100%; }
.lb { font: 12px "Noto Sans", sans-serif; fill: #444; text-anchor: middle; paint-order: stroke; stroke: rgba(255, 255, 255, .75); stroke-width: 2px; }
.place { font-size: 16px; fill: #777; }
.place .main { font-size: 17px; fill: #444; }
.station { font-weight: bold; fill: #4a55b8; }
.peak { fill: #8c5a42; }
.road { font-size: 12px; fill: #333; }
.zoom {
  position: absolute;
  left: 14px;
  top: 14px;
  border-radius: 4px;
  box-shadow: 0 0 0 1px rgba(0, 0, 0, .25);
  overflow: hidden;
}
.zoom button { display: block; width: 36px; height: 36px; padding: 0; border: 0; background: #fff; color: #000; font: bold 24px/34px "Liberation Sans", sans-serif; }
.zoom button + button { border-top: 1px solid #ccc; }
.layers {
  position: absolute;
  right: 14px;
  top: 14px;
  display: flex;
  align-items: center;
  justify-content: center;
  width: 53px;
  height: 52px;
  padding: 0;
  border: 1px solid #a8a8a8;
  border-radius: 5px;
  background: #fff;
}
.layers svg { width: 32px; height: 30px; }
.credit { position: absolute; right: 0; bottom: 0; padding: 0 6px; background: rgba(255, 255, 255, .7); color: #333; font-size: 13px; line-height: 18px; white-space: nowrap; }
.credit a { color: #0078a8; text-decoration: none; }

.form td { padding: 0 var(--pad); }
.form .btn { display: flex; width: 100%; padding: 0 10px; }
.form .btn svg { width: 16px; height: 14px; }
.win-pos .form { margin-bottom: 18px; }
.win-pos .form tr { height: 40px; }
.win-pos .form-coords tr:first-child { height: 35px; }
.win-pos .form-area tr { height: 39px; }
.win-pos .plain { height: 25px; padding: 0 3px; }
.win-pos .field { height: 30px; padding: 0 5px; }
.win-pos .select select { padding: 0 4px; }
.form-coords .k1 { width: 91px; }
.form-coords .k2 { width: 300px; }
.form-coords .k3 { width: 109px; }
.form-address .k1 { width: 56px; }
.form-address .k2 { width: 229px; }
.form-address .k3 { width: 81px; }
.form .k5 { width: 144px; }
.form-address .btn { font-size: 14px; }
.form-area .k1 { width: 78px; }
.form-area td { padding: 0 var(--pad) 0 10px; }
.form-area td:last-child { padding-left: var(--pad); }
.win-pos .actions .btn { gap: 8px; padding: 0 14px; }
.win-pos .actions svg { width: 10px; height: 12px; }
.win-pos .form-area .btn svg { height: 16px; }
.grip { position: absolute; right: 5px; bottom: 5px; width: 9px; height: 9px; color: #777; }

/* Edita foto */
.win-foto {
  left: 589px; right: 1px; top: 1204px; padding-bottom: 6px;
  --fs: 14px; --title: 14px; --bar: 35px; --side: 14px; --bh: 30px; --bp: 16px; --fh: 43px; --x: 13px; --split: 542fr 654fr;
}
.win-foto .titlebar { padding-right: 10px; }
.win-foto > .badge { left: 240px; top: -23px; }
.panel { margin: 8px var(--side) 20px; border: 1px solid var(--line); }
.panel-tools { display: flex; height: 42px; padding-left: 8px; border-bottom: 1px solid var(--line); }
.frame { height: 39px; padding: 2px 0 2px 2px; border: 2px solid #f00; }
.frame .btn { gap: 7px; padding: 0 16px 0 12px; border-radius: 4px 0 0 4px; }
.panel-body { padding: 6px 13px; }
.records { width: 100%; border-collapse: collapse; table-layout: fixed; }
.records th { height: 32px; padding: 0; border: 1px solid var(--line); border-bottom-width: 2px; background: var(--grad); }
.records td { height: 128px; padding: 0 13px; border: 1px solid var(--line); font-size: 16px; }
.records .r1 { width: 69px; }
.records .r2 { width: 324px; }
.records .r4 { width: 142px; }

/* Add new photo */
.win-add {
  left: 921px; right: 14px; top: 1409px; padding-bottom: 9px;
  --fs: 16px; --title: 17px; --bar: 41px; --side: 16px; --pad: 16px; --bh: 36px; --bp: 20px; --fh: 50px; --split: 384fr 460fr;
}
.win-add .titlebar { padding-right: 12px; }
.win-add .form { margin-top: 9px; margin-bottom: 22px; }
.win-add .form th, .win-add .form td { border-color: #d2d2d2; }
.win-add .form tr { height: 50px; }
.win-add .form .tall { height: 97px; }
.win-add .k1 { width: 115px; }
.win-add .field { height: 37px; padding: 0 6px; font-size: 18px; }
.upload { height: 84px; border: 1px solid var(--line); border-radius: 4px; overflow: hidden; }
.upload > div { display: flex; justify-content: center; padding: 4px 0; background: var(--grad); border-bottom: 1px solid var(--line); }
.win-add .form .btn { width: auto; gap: 6px; padding: 0 17px 0 14px; font-size: 17px; }
```
